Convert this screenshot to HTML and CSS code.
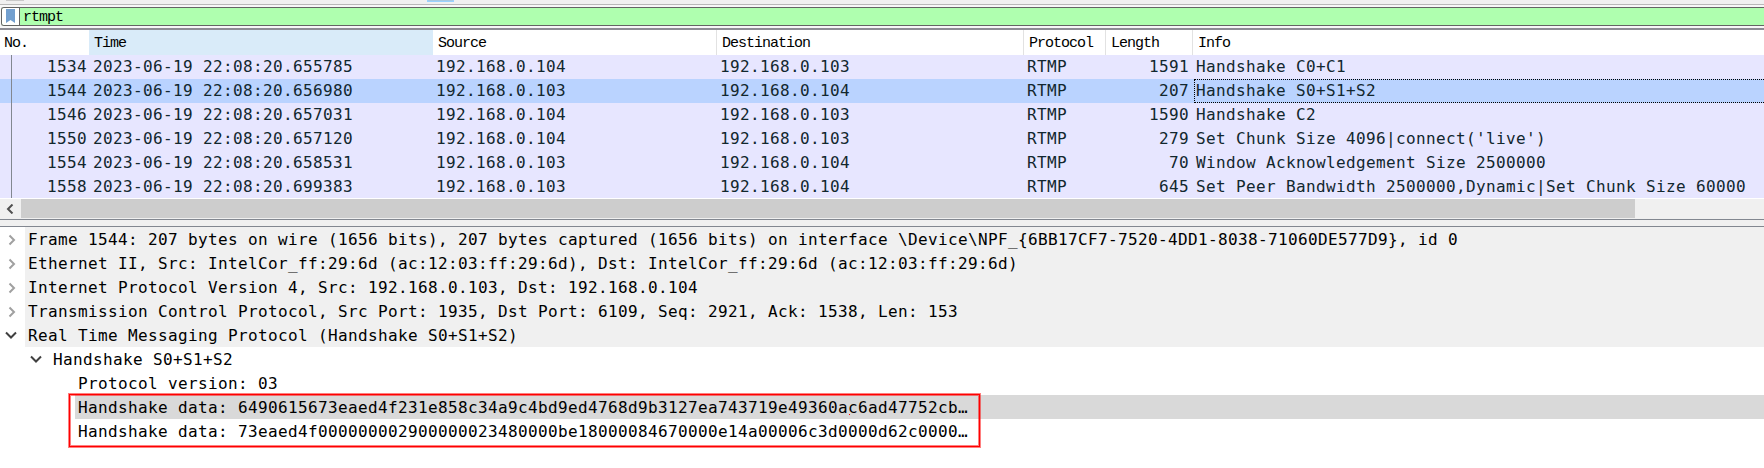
FILE: index.html
```html
<!DOCTYPE html>
<html lang="en">
<head>
<meta charset="utf-8">
<title>rtmpt</title>
<link rel="stylesheet" href="styles.css">
</head>
<body>
<div class="toolbar"><span class="tool"></span><span class="tool-active"></span></div>
<div class="filter-bar">
  <div class="filter">
    <span class="bookmark"><svg width="9" height="14" viewBox="0 0 9 14"><path d="M0 0h9v14L4.500 11 0 14z" fill="#729fcf"/></svg></span>
    <span class="filter-text">rtmpt</span>
  </div>
</div>
<div class="packets">
  <div class="row head"><span>No.</span><span class="sorted">Time</span><span>Source</span><span>Destination</span><span>Protocol</span><span>Length</span><span>Info</span></div>
  <div class="rows">
  <div class="row"><span class="num">1534</span><span class="time">2023-06-19 22:08:20.655785</span><span>192.168.0.104</span><span>192.168.0.103</span><span>RTMP</span><span class="num len">1591</span><span>Handshake C0+C1</span></div>
  <div class="row current"><span class="num">1544</span><span class="time">2023-06-19 22:08:20.656980</span><span>192.168.0.103</span><span>192.168.0.104</span><span>RTMP</span><span class="num len">207</span><span class="focus">Handshake S0+S1+S2</span></div>
  <div class="row"><span class="num">1546</span><span class="time">2023-06-19 22:08:20.657031</span><span>192.168.0.104</span><span>192.168.0.103</span><span>RTMP</span><span class="num len">1590</span><span>Handshake C2</span></div>
  <div class="row"><span class="num">1550</span><span class="time">2023-06-19 22:08:20.657120</span><span>192.168.0.104</span><span>192.168.0.103</span><span>RTMP</span><span class="num len">279</span><span>Set Chunk Size 4096|connect('live')</span></div>
  <div class="row"><span class="num">1554</span><span class="time">2023-06-19 22:08:20.658531</span><span>192.168.0.103</span><span>192.168.0.104</span><span>RTMP</span><span class="num len">70</span><span>Window Acknowledgement Size 2500000</span></div>
  <div class="row"><span class="num">1558</span><span class="time">2023-06-19 22:08:20.699383</span><span>192.168.0.103</span><span>192.168.0.104</span><span>RTMP</span><span class="num len">645</span><span>Set Peer Bandwidth 2500000,Dynamic|Set Chunk Size 60000</span></div>
  </div>
  <div class="scrollbar"><span class="arrow"><svg width="8" height="10" viewBox="0 0 8 10"><path d="M6.500.5L2 5l4.500 4.500" fill="none" stroke="#505050" stroke-width="2"/></svg></span><span class="thumb"></span></div>
</div>
<div class="splitter"></div>
<div class="tree">
  <div class="item top"><svg class="chev" viewBox="0 0 12 12"><path d="M3.500 1.500L8 6l-4.500 4.500"/></svg><span>Frame 1544: 207 bytes on wire (1656 bits), 207 bytes captured (1656 bits) on interface \Device\NPF_{6BB17CF7-7520-4DD1-8038-71060DE577D9}, id 0</span></div>
  <div class="item top"><svg class="chev" viewBox="0 0 12 12"><path d="M3.500 1.500L8 6l-4.500 4.500"/></svg><span>Ethernet II, Src: IntelCor_ff:29:6d (ac:12:03:ff:29:6d), Dst: IntelCor_ff:29:6d (ac:12:03:ff:29:6d)</span></div>
  <div class="item top"><svg class="chev" viewBox="0 0 12 12"><path d="M3.500 1.500L8 6l-4.500 4.500"/></svg><span>Internet Protocol Version 4, Src: 192.168.0.103, Dst: 192.168.0.104</span></div>
  <div class="item top"><svg class="chev" viewBox="0 0 12 12"><path d="M3.500 1.500L8 6l-4.500 4.500"/></svg><span>Transmission Control Protocol, Src Port: 1935, Dst Port: 6109, Seq: 2921, Ack: 1538, Len: 153</span></div>
  <div class="item top"><svg class="chev open" viewBox="0 0 12 12"><path d="M1 3.500L6 8.500l5-5"/></svg><span>Real Time Messaging Protocol (Handshake S0+S1+S2)</span></div>
  <div class="item l1"><svg class="chev open" viewBox="0 0 12 12"><path d="M1 3.500L6 8.500l5-5"/></svg><span>Handshake S0+S1+S2</span></div>
  <div class="item l2"><span>Protocol version: 03</span></div>
  <div class="item l2 selected"><span>Handshake data: 6490615673eaed4f231e858c34a9c4bd9ed4768d9b3127ea743719e49360ac6ad47752cb…</span></div>
  <div class="item l2"><span>Handshake data: 73eaed4f000000002900000023480000be18000084670000e14a00006c3d0000d62c0000…</span></div>
  <div class="marker"></div><i class="dot"></i>
</div>
</body>
</html>
```
FILE: styles.css
```css
* { box-sizing: border-box; }
body { margin: 0; width: 1764px; height: 468px; overflow: hidden; background: #fff; color: #000;
  font: 16px/24px "DejaVu Sans Mono", monospace; letter-spacing: .367px; white-space: nowrap; }
svg { display: block; }
.toolbar { display: flex; height: 5px; background: #f0f0f0; border-bottom: 1px solid #b8b8b8; padding-left: 6px; }
.tool { width: 18px; height: 1px; background: #c8c8c8; }
.tool-active { width: 27px; height: 2px; margin-left: 403px; background: #a8c8e0; border: 1px solid #99d1ff; border-top: 0; }
.filter-bar { height: 23px; padding: 2px 0 2px 1px; background: #f7f7f7; }
.filter { display: flex; height: 19px; border: 1px solid #646464; border-right: 0; border-radius: 3px 0 0 3px; background: #afffaf; overflow: hidden; }
.bookmark { width: 18px; background: #fff; border-right: 1px solid #646464; padding: 1px 0 0 4px; }
.filter-text, .head { font-family: "Liberation Mono", monospace; font-size: 15px; letter-spacing: -1px; }
.filter-text { padding-left: 3px; line-height: 20px; }
.packets { border-top: 2px solid #8c8c94; border-bottom: 1px solid #828790; height: 192px; }
.row { display: grid; grid-template-columns: 89px 344px 284px 307px 82px 87px 571px; height: 24px; background: #e7e6ff; color: #12272e; }
.row > span { padding-left: 3px; overflow: hidden; }
.row > .time { padding-left: 4px; }
.row > .num { text-align: right; padding: 0 2px 0 0; }
.row > .len { padding-right: 4px; }
.row.current { background: #bad3ff; }
.row > .focus { border: 1px dotted #000; border-right: 0; line-height: 22px; margin-left: 1px; padding-left: 1px; }
.row.head { height: 25px; background: #fff; color: #000; line-height: 28px; }
.head > span { padding-left: 5px; border-right: 1px solid #e2e2e2; }
.head > .sorted { background: #d9ebf9; }
.head > span:first-child { padding-left: 4px; }
.head > span:first-child, .head > .sorted, .head > span:last-child { border-right: 0; }
.rows { height: 143px; overflow: hidden; position: relative; }
.rows::after { content: ""; position: absolute; left: 11px; top: 0; width: 1px; height: 143px; background: #828790; }
.scrollbar { display: flex; height: 21px; border-top: 1px solid #fff; background: #f0f0f0; }
.arrow { width: 21px; padding: 5px 0 0 6px; }
.thumb { width: 1614px; height: 19px; background: #cdcdcd; }
.splitter { height: 7px; background: #f0f0f0; border-bottom: 1px solid #828790; }
.tree { position: relative; }
.item { display: flex; height: 24px; line-height: 26px; }
.item > span { flex: 1; height: 24px; padding-left: 3px; }
.chev { width: 12px; height: 12px; margin: 7px 7px 0 6px; fill: none; stroke: #a0a0a0; stroke-width: 2; }
.open { stroke: #404040; margin: 6px 8px 0 5px; }
.top > span { background: #f0f0f0; }
.l1 { padding-left: 25px; }
.l2 { padding-left: 75px; }
.selected > span { background: #d9d9d9; }
.marker { position: absolute; left: 69px; top: 167px; width: 911px; height: 53px; border: 1px solid #f00; box-shadow: 0 0 0 1px rgba(255,0,0,.5), inset 0 0 0 1px rgba(255,0,0,.5); }
.dot { position: absolute; left: 849px; top: 187px; width: 1px; height: 1px; background: #f00; }
```
